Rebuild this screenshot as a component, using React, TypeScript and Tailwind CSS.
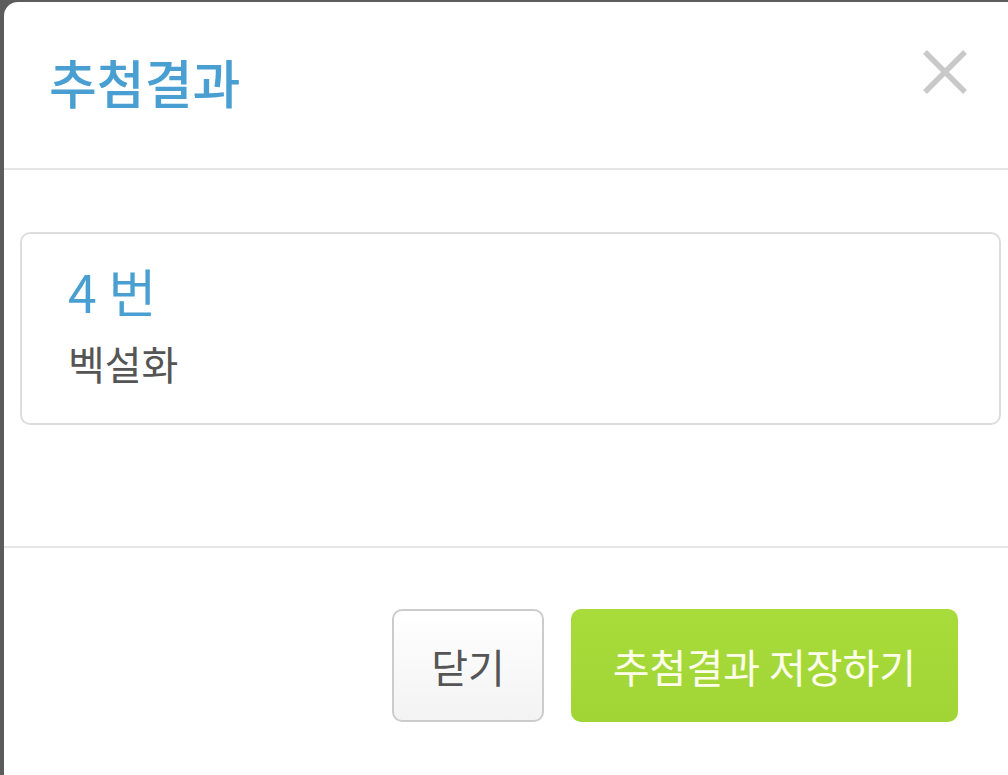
import React from "react";

export default function App() {
  const font = { fontFamily: '"Noto Sans CJK KR", "Noto Sans", sans-serif' };
  return (
    <div
      className="w-[1008px] h-[775px] bg-[#5c5c5c] pl-[4px] pt-[2px] overflow-hidden"
      style={font}
    >
      <div className="w-[1040px] h-[800px] bg-white rounded-tl-[14px] flex flex-col">
        {/* header */}
        <div className="h-[166px] flex items-start justify-between shrink-0">
          <h1 className="mt-[54px] ml-[45px] text-[52px] leading-[52px] text-[#4a9fd2] font-medium">
            추첨결과
          </h1>
          <button className="mt-[48px] mr-[77px] w-[44px] h-[44px] flex items-center justify-center">
            <svg width="44" height="44" viewBox="0 0 44 44">
              <path
                d="M2 2 L42 42 M42 2 L2 42"
                stroke="#c9c9c9"
                strokeWidth="5.5"
                strokeLinecap="butt"
              />
            </svg>
          </button>
        </div>
        <div className="h-[2px] bg-[#e6e6e6] shrink-0" />
        {/* body */}
        <div className="h-[376px] pt-[62px] shrink-0">
          <div className="ml-[16px] w-[981px] h-[193px] border-2 border-[#dddddd] rounded-[10px] pl-[46px] pt-[27px]">
            <div className="text-[52px] leading-[60px] text-[#4a9fd2] font-normal">4 번</div>
            <div className="mt-[18px] text-[40px] leading-[48px] text-[#555555]">벡설화</div>
          </div>
        </div>
        <div className="h-[2px] bg-[#e6e6e6] shrink-0" />
        {/* footer */}
        <div className="pt-[61px] flex">
          <div className="w-[954px] flex justify-end gap-[27px]">
            <button className="w-[152px] h-[113px] border-2 border-[#cccccc] rounded-[10px] bg-gradient-to-b from-white to-[#f3f3f3] text-[40px] text-[#555555] flex items-center justify-center">
              닫기
            </button>
            <button className="w-[387px] h-[113px] rounded-[10px] bg-gradient-to-b from-[#a8dc3b] to-[#a0d535] text-[40px] text-[#fdfdea] flex items-center justify-center">
              추첨결과 저장하기
            </button>
          </div>
        </div>
      </div>
    </div>
  );
}
